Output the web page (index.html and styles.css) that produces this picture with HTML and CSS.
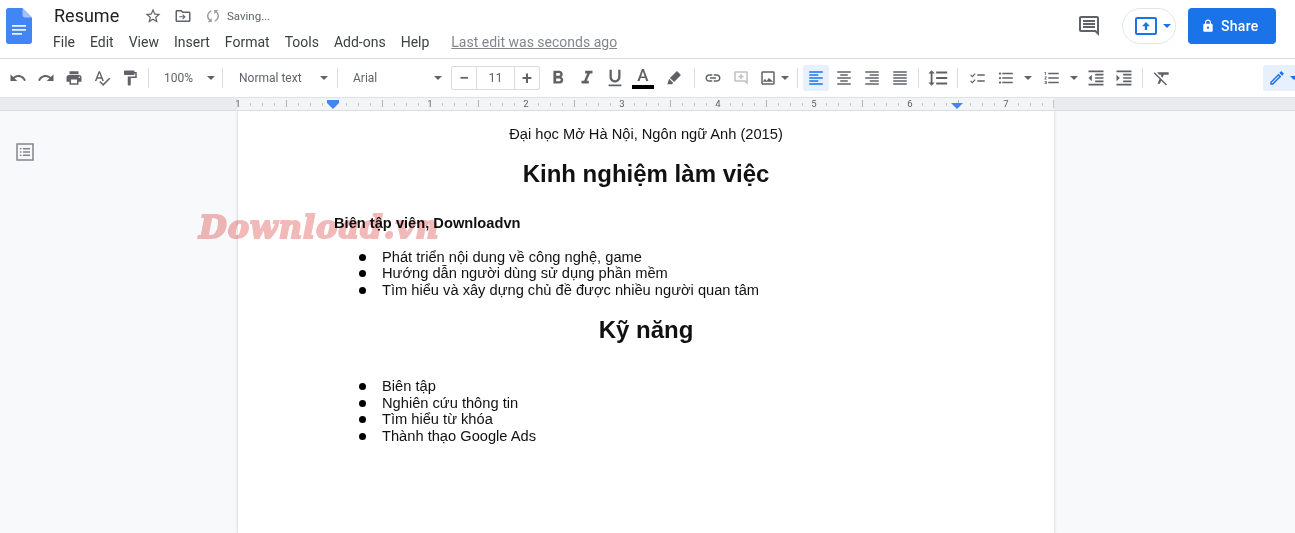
FILE: index.html
```html
<!DOCTYPE html>
<html lang="vi">
<head>
<meta charset="utf-8">
<title>Resume</title>
<link rel="stylesheet" href="styles.css">
</head>
<body>
<header class="topbar">
  <svg class="logo" viewBox="0 0 26 36"><path fill="#4285f4" d="M16.5 0H2.4C1.1 0 0 1.1 0 2.4v31.2C0 34.9 1.1 36 2.4 36h21.2c1.3 0 2.4-1.1 2.4-2.4V9.5z"/><path fill="#a1c2fa" d="M16.5 0v7.1c0 1.3 1.100 2.400 2.400 2.400H26z"/><path fill="#f1f1f1" d="M6 17h14v1.800H6zM6 21h14v1.800H6zM6 25h10v1.800H6z"/></svg>
  <div class="titles">
    <div class="title-row">
      <span class="doc-name">Resume</span>
      <svg class="ti star" viewBox="0 0 24 24"><path d="M22 9.240l-7.190-.62L12 2 9.190 8.630 2 9.240l5.460 4.730L5.820 21 12 17.270 18.180 21l-1.630-7.030L22 9.240zM12 15.400l-3.760 2.270 1-4.280-3.320-2.880 4.380-.38L12 6.100l1.710 4.040 4.380.38-3.320 2.880 1 4.280L12 15.400z"/></svg>
      <svg class="ti folder" viewBox="0 0 24 24"><path d="M20 6h-8l-2-2H4c-1.100 0-2 .9-2 2v12c0 1.100.9 2 2 2h16c1.100 0 2-.9 2-2V8c0-1.100-.9-2-2-2zm0 12H4V6h5.170l2 2H20v10z"/><path d="M12 9.500l-1 1 1.800 1.800H7v1.400h5.800L11 15.500l1 1 3.500-3.500z"/></svg>
      <svg class="ti sync" viewBox="0 0 24 24"><path d="M12 4V1L8 5l4 4V6c3.310 0 6 2.690 6 6 0 1.010-.25 1.970-.7 2.800l1.460 1.460C19.540 15.030 20 13.570 20 12c0-4.420-3.580-8-8-8zm0 14c-3.310 0-6-2.690-6-6 0-1.010.25-1.970.7-2.800L5.240 7.740C4.460 8.970 4 10.430 4 12c0 4.420 3.580 8 8 8v3l4-4-4-4v3z"/></svg>
      <span class="saving">Saving...</span>
    </div>
    <nav class="menu">
      <span>File</span><span>Edit</span><span>View</span><span>Insert</span><span>Format</span><span>Tools</span><span>Add-ons</span><span>Help</span>
      <a class="last-edit">Last edit was seconds ago</a>
    </nav>
  </div>
  <div class="actions">
    <svg class="comments" viewBox="0 0 24 24"><path d="M20 2H4c-1.100 0-2 .9-2 2v12c0 1.100.9 2 2 2h14l4 4V4c0-1.100-.9-2-2-2zm0 15.170L18.830 16H4V4h16v13.170zM6 12h12v2H6zm0-3h12v2H6zm0-3h12v2H6z"/></svg>
    <div class="present">
      <svg class="present-ic" viewBox="0 0 22 18"><path fill="#1a73e8" d="M2 0h18a2 2 0 0 1 2 2v14a2 2 0 0 1-2 2H2a2 2 0 0 1-2-2V2a2 2 0 0 1 2-2zm0 2v14h18V2z"/><path fill="#1a73e8" d="M11 5l4 4.200h-2.800V13H9.800V9.200H7z"/></svg>
      <span class="caret blue"></span>
    </div>
    <button class="share">
      <svg class="lock" viewBox="0 0 24 24"><path d="M18 8h-1V6c0-2.760-2.240-5-5-5S7 3.240 7 6v2H6c-1.100 0-2 .9-2 2v10c0 1.100.9 2 2 2h12c1.100 0 2-.9 2-2V10c0-1.100-.9-2-2-2zm-6 9c-1.100 0-2-.9-2-2s.9-2 2-2 2 .9 2 2-.9 2-2 2zm3.100-9H8.900V6c0-1.710 1.390-3.100 3.100-3.100 1.710 0 3.100 1.390 3.100 3.100v2z"/></svg>
      Share
    </button>
  </div>
</header>

<div class="toolbar">
  <span class="btn"><svg viewBox="0 0 24 24"><path d="M12.500 8c-2.650 0-5.050.99-6.900 2.600L2 7v9h9l-3.620-3.620c1.390-1.160 3.160-1.880 5.120-1.880 3.540 0 6.550 2.310 7.600 5.500l2.370-.78C21.080 11.030 17.150 8 12.500 8z"/></svg></span>
  <span class="btn"><svg viewBox="0 0 24 24"><path d="M18.400 10.600C16.550 8.990 14.150 8 11.500 8c-4.650 0-8.580 3.030-9.960 7.220L3.900 16c1.050-3.190 4.050-5.500 7.600-5.500 1.950 0 3.730.72 5.120 1.880L13 16h9V7l-3.600 3.600z"/></svg></span>
  <span class="btn"><svg viewBox="0 0 24 24"><path d="M19 8H5c-1.660 0-3 1.340-3 3v6h4v4h12v-4h4v-6c0-1.660-1.340-3-3-3zm-3 11H8v-5h8v5zm3-7c-.55 0-1-.45-1-1s.45-1 1-1 1 .45 1 1-.45 1-1 1zm-1-9H6v4h12V3z"/></svg></span>
  <span class="btn"><svg viewBox="0 0 24 24"><path d="M12.450 16h2.090L9.430 3H7.570L2.460 16h2.090l1.120-3h5.640l1.140 3zm-6.020-5L8.500 5.480 10.570 11H6.430zm15.160.59l-8.090 8.090L9.830 16l-1.410 1.410 5.090 5.090L23 13l-1.410-1.410z"/></svg></span>
  <span class="btn"><svg viewBox="0 0 24 24"><path d="M18 4V3c0-.55-.45-1-1-1H5c-.55 0-1 .45-1 1v4c0 .55.45 1 1 1h12c.55 0 1-.45 1-1V6h1v4H9v11c0 .55.45 1 1 1h2c.55 0 1-.45 1-1v-9h8V4h-3z"/></svg></span>
  <i class="sep"></i>
  <span class="drop zoom-drop"><span>100%</span><b class="caret"></b></span>
  <i class="sep"></i>
  <span class="drop style-drop"><span>Normal text</span><b class="caret"></b></span>
  <i class="sep"></i>
  <span class="drop font-drop"><span>Arial</span><b class="caret"></b></span>
  <span class="size">
    <span class="size-btn">&#8722;</span><span class="size-val">11</span><span class="size-btn">+</span>
  </span>
  <span class="btn big"><svg viewBox="0 0 24 24"><path d="M15.600 10.790c.97-.67 1.650-1.770 1.650-2.790 0-2.260-1.750-4-4-4H7v14h7.040c2.090 0 3.710-1.700 3.710-3.790 0-1.520-.86-2.820-2.150-3.420zM10 6.500h3c.83 0 1.500.67 1.500 1.500s-.67 1.500-1.500 1.500h-3v-3zm3.500 9H10v-3h3.500c.83 0 1.500.67 1.500 1.500s-.67 1.500-1.500 1.500z"/></svg></span>
  <span class="btn big shift-i"><svg viewBox="0 0 24 24"><path d="M10 4v3h2.210l-3.420 8H6v3h8v-3h-2.210l3.420-8H18V4z"/></svg></span>
  <span class="btn big"><svg viewBox="0 0 24 24"><path d="M12 17c3.310 0 6-2.690 6-6V3h-2.500v8c0 1.930-1.570 3.500-3.500 3.500S8.500 12.930 8.500 11V3H6v8c0 3.310 2.690 6 6 6zm-7 2v2h14v-2H5z"/></svg></span>
  <span class="btn color"><span class="color-a">A</span><i class="color-bar"></i></span>
  <span class="btn wide-h"><svg viewBox="0 0 24 24"><path d="M16.600 3.300l4.100 4.100c.4.4.4 1 0 1.400l-8.600 8.600-5.500-5.500 8.600-8.600c.4-.4 1-.4 1.400 0zM5.500 13.100l5.400 5.400L9 20.400H3z"/></svg></span>
  <i class="sep sep-l"></i>
  <span class="btn"><svg viewBox="0 0 24 24"><path d="M3.900 12c0-1.710 1.390-3.100 3.100-3.100h4V7H7c-2.760 0-5 2.240-5 5s2.240 5 5 5h4v-1.900H7c-1.710 0-3.100-1.390-3.100-3.100zM8 13h8v-2H8v2zm9-6h-4v1.900h4c1.710 0 3.100 1.390 3.100 3.100s-1.390 3.100-3.100 3.100h-4V17h4c2.760 0 5-2.240 5-5s-2.240-5-5-5z"/></svg></span>
  <span class="btn dim"><svg viewBox="0 0 24 24"><path d="M20 3H4a1 1 0 0 0-1 1v12a1 1 0 0 0 1 1h13l4 4V4a1 1 0 0 0-1-1zm-1 13.200L17.800 15H5V5h14zM11 6.500h2V9h2.500v2H13v2.500h-2V11H8.500V9H11z"/></svg></span>
  <span class="btn narrow"><svg viewBox="0 0 24 24"><path d="M21 19V5c0-1.100-.9-2-2-2H5c-1.100 0-2 .9-2 2v14c0 1.100.9 2 2 2h14c1.100 0 2-.9 2-2zM19 19H5V5h14zm-5.860-6.860l-3 3.870L8 13.140 5 17h14z"/></svg></span>
  <b class="caret solo"></b>
  <i class="sep sep-img"></i>
  <span class="btn active"><svg viewBox="0 0 24 24"><path d="M15 15H3v2h12v-2zm0-8H3v2h12V7zM3 13h18v-2H3v2zm0 8h18v-2H3v2zM3 3v2h18V3H3z"/></svg></span>
  <span class="btn"><svg viewBox="0 0 24 24"><path d="M7 15v2h10v-2H7zm-4 6h18v-2H3v2zm0-8h18v-2H3v2zm4-6v2h10V7H7zM3 3v2h18V3H3z"/></svg></span>
  <span class="btn"><svg viewBox="0 0 24 24"><path d="M3 21h18v-2H3v2zm6-4h12v-2H9v2zm-6-4h18v-2H3v2zm6-4h12V7H9v2zM3 3v2h18V3H3z"/></svg></span>
  <span class="btn"><svg viewBox="0 0 24 24"><path d="M3 21h18v-2H3v2zm0-4h18v-2H3v2zm0-4h18v-2H3v2zm0-4h18V7H3v2zm0-6v2h18V3H3z"/></svg></span>
  <i class="sep"></i>
  <span class="btn big"><svg viewBox="0 0 24 24"><path d="M6 7h2.500L5 3.500 1.500 7H4v10H1.500L5 20.500 8.500 17H6V7zm4-2v2h12V5H10zm0 14h12v-2H10v2zm0-6h12v-2H10v2z"/></svg></span>
  <i class="sep sep-c"></i>
  <span class="btn"><svg viewBox="0 0 24 24"><path d="M11 7h10v2H11zM11 15h10v2H11zM2.700 7.200l1.800 1.800 3.200-3.500 1.100 1-4.300 4.700-2.900-2.900zM2.700 15.200l1.800 1.800 3.200-3.500 1.100 1-4.300 4.700-2.900-2.900z"/></svg></span>
  <span class="btn"><svg viewBox="0 0 24 24"><path d="M4 10.500c-.83 0-1.500.67-1.500 1.500s.67 1.500 1.500 1.500 1.500-.67 1.500-1.500-.67-1.500-1.500-1.500zm0-6c-.83 0-1.500.67-1.500 1.500S3.170 7.500 4 7.500 5.500 6.830 5.500 6 4.830 4.500 4 4.500zm0 12c-.83 0-1.500.68-1.500 1.500s.68 1.500 1.500 1.500 1.500-.68 1.500-1.500-.67-1.500-1.500-1.500zM7 19h14v-2H7v2zm0-6h14v-2H7v2zm0-8v2h14V5H7z"/></svg></span>
  <b class="caret solo list-caret first"></b>
  <span class="btn"><svg viewBox="0 0 24 24"><path d="M2 17h2v.5H3v1h1v.5H2v1h3v-4H2v1zm1-9h1V4H2v1h1v3zm-1 3h1.800L2 13.100v.9h3v-1H3.200L5 10.900V10H2v1zm5-6v2h14V5H7zm0 14h14v-2H7v2zm0-6h14v-2H7v2z"/></svg></span>
  <b class="caret solo list-caret"></b>
  <span class="btn mid"><svg viewBox="0 0 24 24"><path d="M11 17h10v-2H11v2zm-8-5l4 4V8l-4 4zm0 9h18v-2H3v2zM3 3v2h18V3H3zm8 6h10V7H11v2zm0 4h10v-2H11v2z"/></svg></span>
  <span class="btn mid"><svg viewBox="0 0 24 24"><path d="M3 21h18v-2H3v2zM3 8v8l4-4-4-4zm8 9h10v-2H11v2zM3 3v2h18V3H3zm8 6h10V7H11v2zm0 4h10v-2H11v2z"/></svg></span>
  <i class="sep"></i>
  <span class="btn mid"><svg viewBox="0 0 24 24"><path d="M3.270 5L2 6.270l6.970 6.970L6.500 19h3l1.570-3.660L16.730 21 18 19.730 3.550 5.270 3.270 5zM6 5v.18L8.820 8h2.400l-.72 1.680 2.100 2.100L14.210 8H20V5H6z"/></svg></span>
  <span class="mode"><svg viewBox="0 0 24 24"><path d="M14.060 9.020l.92.92L5.920 19H5v-.92l9.060-9.060M17.660 3c-.25 0-.51.1-.7.29l-1.830 1.830 3.750 3.750 1.830-1.830c.39-.39.39-1.020 0-1.410l-2.340-2.340c-.2-.2-.45-.29-.71-.29zm-3.600 3.190L3 17.250V21h3.750L17.810 9.940l-3.750-3.750z"/></svg><b class="caret blue"></b></span>
</div>

<div class="ruler">
  <div class="ruler-track">
    <span class="tick-num">1</span><span class="tick-num">&nbsp;</span><span class="tick-num">1</span><span class="tick-num">2</span><span class="tick-num">3</span><span class="tick-num">4</span><span class="tick-num">5</span><span class="tick-num">6</span><span class="tick-num">7</span>
    <i class="indent left"></i><i class="indent right"></i>
  </div>
</div>

<main class="canvas">
  <svg class="outline" viewBox="0 0 18 18"><path d="M1 1h16v16H1z" fill="none" stroke="#80868b" stroke-width="1.500"/><path d="M4 5h1.500v1.500H4zM7 5h7v1.500H7zM4 8.300h1.500v1.500H4zM7 8.300h7v1.500H7zM4 11.600h1.500v1.500H4zM7 11.600h7v1.500H7z" fill="#80868b"/></svg>
  <article class="page">
    <p class="center">Đại học Mở Hà Nội, Ngôn ngữ Anh (2015)</p>
    <h1 class="h-first">Kinh nghiệm làm việc</h1>
    <h2 class="job">Biên tập viên, Downloadvn</h2>
    <ul class="list-first">
      <li>Phát triển nội dung về công nghệ, game</li>
      <li>Hướng dẫn người dùng sử dụng phần mềm</li>
      <li>Tìm hiểu và xây dựng chủ đề được nhiều người quan tâm</li>
    </ul>
    <h1 class="h-second">Kỹ năng</h1>
    <ul class="list-second">
      <li>Biên tập</li>
      <li>Nghiên cứu thông tin</li>
      <li>Tìm hiểu từ khóa</li>
      <li>Thành thạo Google Ads</li>
    </ul>
  </article>
  <div class="watermark">Download.vn</div>
</main>
</body>
</html>
```
FILE: styles.css
```css
* { box-sizing: border-box; }
html, body { margin: 0; height: 100%; overflow: hidden; }
body { font-family: Roboto, "Liberation Sans", sans-serif; color: #3c4043; background: #fff; display: flex; flex-direction: column; }

.topbar { height: 58px; flex: none; display: flex; align-items: flex-start; padding: 8px 19px 0 6px; }
.logo { width: 26px; height: 36px; flex: none; margin-right: 22px; }
.titles { display: flex; flex-direction: column; }
.title-row { display: flex; align-items: center; height: 16px; }
.doc-name { font-size: 18px; color: #202124; width: 90px; line-height: 16px; }
.ti { width: 18px; height: 18px; fill: #5f6368; flex: none; }
.star { margin-right: 12px; }
.folder { margin-right: 12px; }
.sync { fill: #9aa0a6; margin-right: 5px; transform: rotate(40deg); }
.saving { font-size: 11.500px; color: #5f6368; }
.menu { display: flex; align-items: center; gap: 15px; font-size: 14px; color: #3c4043; margin: 10px 0 0 -1px; height: 16px; }
.last-edit { font-size: 14px; color: #80868b; text-decoration: underline; margin-left: 7px; }

.actions { margin-left: auto; display: flex; align-items: center; height: 36px; }
.comments { width: 24px; height: 24px; fill: #5f6368; margin-right: 21px; }
.present { width: 54px; height: 36px; border: 1px solid #e3e5e8; border-radius: 18px; display: flex; align-items: center; padding-left: 12px; gap: 6px; margin-right: 12px; }
.present-ic { width: 22px; height: 18px; }
.share { width: 88px; height: 36px; border: 0; border-radius: 4px; background: #1a73e8; color: #fff; font: 500 14px Roboto, sans-serif; letter-spacing: .3px; display: flex; align-items: center; gap: 6px; padding: 0 0 0 13px; }
.lock { width: 14px; height: 14px; fill: #fff; flex: none; }

.caret { display: inline-block; width: 0; height: 0; border-left: 4.500px solid transparent; border-right: 4.500px solid transparent; border-top: 4.500px solid #5f6368; flex: none; }
.caret.blue { border-top-color: #1a73e8; }

.toolbar { height: 39px; flex: none; border-top: 1px solid #dadce0; display: flex; align-items: center; padding: 0 0 1px 4px; background: #fff; }
.btn { width: 28px; height: 26px; display: flex; align-items: center; justify-content: center; flex: none; }
.btn svg { width: 18px; height: 18px; fill: #5f6368; flex: none; }
.btn.big svg { width: 22px; height: 22px; }
.btn.mid svg { width: 20px; height: 20px; }
.btn.dim svg { fill: #bdc1c6; }
.btn.narrow { width: 26px; }
.btn.active { background: #e8f0fe; border-radius: 2px; width: 26px; margin-right: 1px; }
.btn.active svg { fill: #1a73e8; }
.btn.wide-h { margin-left: 3px; }
.btn.shift-i { margin-left: 1px; }
.sep { display: block; width: 1px; height: 20px; background: #dadce0; margin: 0 5px 0 4px; flex: none; }
.sep-l { margin-left: 6px; margin-right: 4px; }
.sep-img { margin: 0 5px 0 8px; }
.sep-c { margin: 0 6px 0 5px; }
.drop { display: flex; align-items: center; justify-content: space-between; font-size: 12px; color: #5f6368; flex: none; }
.zoom-drop { width: 64px; padding: 0 3.500px 0 10px; }
.style-drop { width: 105px; padding: 0 5.500px 0 11px; }
.font-drop { width: 108px; padding: 0 9.500px 0 10px; }
.list-caret { margin: 0 4px; }
.list-caret.first { margin-right: 6px; }
.size { display: flex; width: 89px; height: 24px; border: 1px solid #dadce0; border-radius: 2px; margin: 0 4px 0 0; flex: none; }
.size-btn { width: 24px; display: flex; align-items: center; justify-content: center; font-size: 18px; font-weight: 500; color: #5f6368; line-height: 1; }
.size-val { flex: 1; text-align: center; font-size: 12.500px; line-height: 22px; border-left: 1px solid #dadce0; border-right: 1px solid #dadce0; color: #5f6368; }
.color { flex-direction: column; justify-content: flex-start; }
.color-a { font-size: 17px; font-weight: 500; color: #5f6368; line-height: 20px; }
.color-bar { display: block; width: 22px; height: 4px; background: #000; }
.mode { margin-left: auto; width: 32px; height: 26px; background: #e8f0fe; border-radius: 2px 0 0 2px; display: flex; align-items: center; padding-left: 5px; gap: 4px; flex: none; }
.mode svg { width: 18px; height: 18px; fill: #1a73e8; flex: none; }

.ruler { height: 14px; flex: none; background: #e9ebed; border-top: 1px solid #dfe1e5; border-bottom: 1px solid #dadce0; padding-left: 190px; position: relative; z-index: 2; }
.ruler-track {
  position: relative; width: 864px; height: 12px; display: flex;
  --tick: #c0c3c7;
  background-image:
    linear-gradient(var(--tick), var(--tick)),
    repeating-linear-gradient(to right, transparent 0 48px, #aeb1b5 48px 49px, transparent 49px 96px),
    repeating-linear-gradient(to right, transparent 0 12px, var(--tick) 12px 13px, transparent 13px 24px, var(--tick) 24px 25px, transparent 25px 36px, var(--tick) 36px 37px, transparent 37px 60px, var(--tick) 60px 61px, transparent 61px 72px, var(--tick) 72px 73px, transparent 73px 84px, var(--tick) 84px 85px, transparent 85px 96px),
    linear-gradient(#f3f4f5, #f3f4f5);
  background-size: 1px 8px, 816px 7px, 816px 3px, 816px 12px;
  background-position: 863px 2px, 48px 2px, 48px 5px, 48px 0;
  background-repeat: no-repeat;
}
.tick-num { width: 96px; flex: none; font-size: 9.500px; line-height: 12px; color: #5f6368; text-align: center; }
.indent { position: absolute; width: 0; height: 0; top: 5px; border-left: 6px solid transparent; border-right: 6px solid transparent; border-top: 6px solid #4285f4; }
.indent.left { left: 137px; }
.indent.left::before { content: ""; position: absolute; left: -6px; top: -9px; width: 12px; height: 3px; background: #4285f4; }
.indent.right { left: 761px; }

.canvas { flex: 1; position: relative; background: #f8f9fa; display: flex; padding-left: 238px; overflow: hidden; }
.outline { position: absolute; left: 16px; top: 32px; width: 18px; height: 18px; }
.page { width: 816px; background: #fff; box-shadow: 0 0 3px rgba(60,64,67,.25); padding: 15px 96px 0; font-family: "Liberation Sans", Arial, sans-serif; color: #111; font-size: 14.670px; line-height: 16.800px; }
.page p, .page h1, .page h2, .page ul { margin: 0; }
.center { text-align: center; }
.page h1 { font-size: 24px; line-height: 28px; text-align: center; font-weight: 700; }
.page .h-first { margin-top: 17px; }
.page .job { font-size: 14.670px; font-weight: 700; margin-top: 27px; line-height: 17px; }
.page .list-first { margin-top: 17px; }
.page .h-second { margin-top: 18px; }
.page .list-second { margin-top: 34px; }
.page ul { list-style: none; padding-left: 48px; }
.page li { height: 16.500px; display: flex; align-items: center; }
.page li::before { content: ""; width: 7px; height: 7px; border-radius: 50%; background: #000; margin: 0 16px 0 -23px; flex: none; }
.watermark { position: absolute; left: 199px; top: 97px; font: italic 700 32px "DejaVu Serif", serif; letter-spacing: 1px; color: #f2b9b9; -webkit-text-stroke: 2px #f2b9b9; mix-blend-mode: multiply; pointer-events: none; white-space: nowrap; }
```
